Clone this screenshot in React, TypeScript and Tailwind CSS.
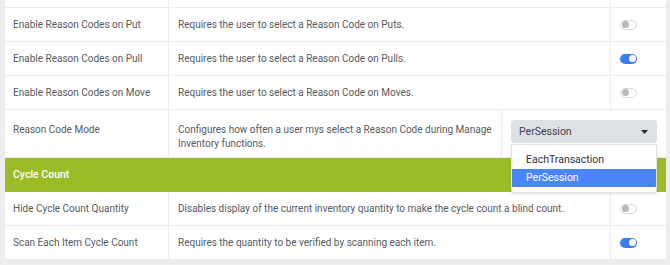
type Row = { label: string; desc: string; on: boolean };

const reasonRows: Row[] = [
  { label: "Enable Reason Codes on Put", desc: "Requires the user to select a Reason Code on Puts.", on: false },
  { label: "Enable Reason Codes on Pull", desc: "Requires the user to select a Reason Code on Pulls.", on: true },
  { label: "Enable Reason Codes on Move", desc: "Requires the user to select a Reason Code on Moves.", on: false },
];

const cycleRows: Row[] = [
  {
    label: "Hide Cycle Count Quantity",
    desc: "Disables display of the current inventory quantity to make the cycle count a blind count.",
    on: false,
  },
  { label: "Scan Each Item Cycle Count", desc: "Requires the quantity to be verified by scanning each item.", on: true },
];

function Toggle({ on }: { on: boolean }) {
  return on ? (
    <span className="flex h-[10px] w-[17px] items-center justify-end rounded-full bg-[#3d7cf5] pr-[1.5px]">
      <span className="h-[7px] w-[7px] rounded-full bg-white" />
    </span>
  ) : (
    <span className="flex h-[10px] w-[17px] items-center rounded-full border border-[#d6d9dd] bg-white pl-[1px]">
      <span className="h-[7px] w-[7px] rounded-full bg-[#b4b9bf]" />
    </span>
  );
}

function SettingRow({ row }: { row: Row }) {
  return (
    <div className="flex h-[34px] border-b border-[#ececec]">
      <div className="flex w-[164px] items-center whitespace-nowrap border-r border-[#ececec] pl-[8px]">{row.label}</div>
      <div className="flex w-[442px] items-center whitespace-nowrap border-r border-[#ececec] pl-[9px]">{row.desc}</div>
      <div className="flex flex-1 items-center pl-[9px]">
        <Toggle on={row.on} />
      </div>
    </div>
  );
}

export default function App() {
  return (
    <div
      className="h-[265px] overflow-hidden bg-[#ededed] px-[5px] text-[10px] text-[#555a60]"
      style={{ fontFamily: "Roboto, 'Liberation Sans', sans-serif" }}
    >
      <div className="w-[661px] bg-white">
        {/* tail of the row above */}
        <div className="flex h-[8px] border-b border-[#ececec]">
          <div className="w-[164px] border-r border-[#ececec]" />
          <div className="w-[442px] border-r border-[#ececec]" />
          <div className="flex-1" />
        </div>

        {reasonRows.map((r) => (
          <SettingRow key={r.label} row={r} />
        ))}

        {/* Reason Code Mode */}
        <div className="flex h-[48px] border-b border-[#ececec] leading-[14px]">
          <div className="w-[164px] border-r border-[#ececec] pl-[8px] pt-[13px]">Reason Code Mode</div>
          <div className="w-[333px] border-r border-[#ececec] pl-[9px] pr-[4px] pt-[13px]">
            Configures how often a user mys select a Reason Code during Manage Inventory functions.
          </div>
          <div className="relative flex-1 pl-[9px] pt-[10px]">
            <div className="flex h-[23px] w-[146px] items-center justify-between rounded-[3px] bg-[#dde1e6] pl-[8px] pr-[9px] text-[10.5px] text-[#3d4248]">
              <span>PerSession</span>
              <svg width="7" height="4" viewBox="0 0 7 4">
                <path d="M0 0h7L3.5 4z" fill="#2b2f33" />
              </svg>
            </div>
            <div className="absolute left-[9px] top-[34px] z-10 w-[146px] rounded-b-[3px] border border-[#e2e4e7] bg-white py-[5px] text-[10.5px] text-[#2f3337] shadow-sm">
              <div className="flex h-[19px] items-center pl-[14px]">EachTransaction</div>
              <div className="flex h-[18px] items-center bg-[#4a86f7] pl-[14px] text-white">PerSession</div>
            </div>
          </div>
        </div>

        <div className="flex h-[34px] items-center bg-[#9cbb29] pl-[8px] text-[10.5px] font-medium text-white">
          Cycle Count
        </div>

        {cycleRows.map((r) => (
          <SettingRow key={r.label} row={r} />
        ))}
      </div>
    </div>
  );
}
